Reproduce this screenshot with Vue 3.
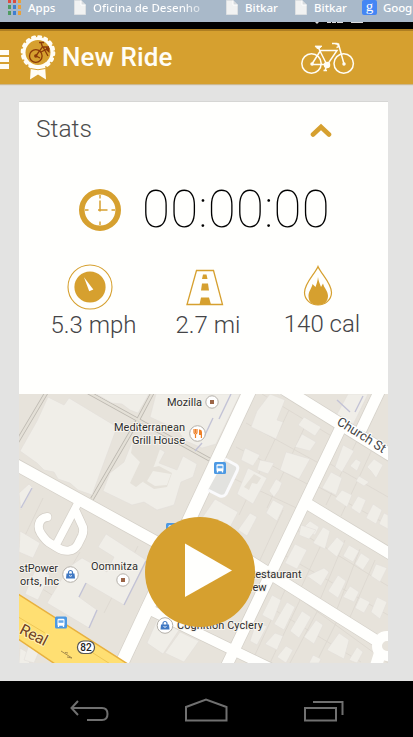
<script setup>
const bookmarks = [
  { kind: 'apps', label: 'Apps' },
  { kind: 'page', label: 'Oficina de Desenho', size: 'long' },
  { kind: 'page', label: 'Bitkar', size: 'mid' },
  { kind: 'page', label: 'Bitkar', size: 'last' },
  { kind: 'google', label: 'Goog' },
]
const appColors = ['#dc4b3f', '#dc4b3f', '#e9a13b', '#4f9b62', '#3f7fd0', '#e9a13b', '#4f9b62', '#3f7fd0', '#e9a13b']

const minorRoads = [
  'M48 390L16 444', 'M84 390L214 462', 'M154 390L138 420L92 499',
]
const roads = [
  { d: 'M10 461.5L177 553.5', w: 11.5 },
  { d: 'M250 390L121 665', w: 13 },
  { d: 'M284 389L392 456', w: 12 },
  { d: 'M380 390L361 430', w: 11 },
  { d: 'M342 425L226 667', w: 11 },
  { d: 'M306 503L392 555', w: 11 },
  { d: 'M240 555L377 641', w: 11 },
  { d: 'M142 606L270 668', w: 10 },
  { d: 'M78 503L56.5 544', w: 7.6 },
]
const loop = 'M47.3 517C38 518 37 528 41 533.500C44 538 46 540.500 49 542.500L57 547.500C66 553 74 551 77.500 545L82 536C84 531 84 528 81.500 524L76 512'
const buildings = [
  'M48 397L64 405L69 398L117 427L92 495L78 490L70 483L58 479L54 472L44 470L37 463L20 451L37 421Z',
  'M96 394L149 394L138 413L130 410L122 404L112 403Z',
  'M156 394L240 394L216 444L202 448L184 440L178 430L150 417Z',
  'M134 437L146 447L153 445L165 452L159 463L177 470L183 456L197 464L193 477L181 482L174 505L157 510L144 502L132 505L103 491L110 473L124 462Z',
  'M19 493L29 484L33 488L21 510Z',
  'M106 534L146 560L124 605L86 583L79 597L97 610L89 628L47 603L69 567L82 558L107 572L114 557L98 547Z',
  'M20 531L40 543L33 558L19 552Z', 'M36 568L50 575L38 600L25 594Z',
  'M20 648L35 657L28 664L19 664Z', 'M30 641L41 647L34 663L24 660Z',
  'M270 394L285 400L277 420L283 422L276 439L251 427L257 411Z',
  'M304 417L321 427L315 436L298 425Z', 'M302 434L316 442L310 451L295 447Z',
  'M286 452L310 459L299 479L280 470Z', 'M245 448L260 455L253 466L241 460Z',
  'M260 460L274 463L268 474L257 470Z', 'M248 468L267 478L253 504L237 494Z',
  'M276 479L282 483L279 490L274 497L269 491Z', 'M273 500L284 506L277 521L266 513Z',
  'M215 499L238 512L225 537L200 521Z', 'M250 513L257 517L247 536L238 530Z',
  'M343 445L354 451L342 472L335 467Z', 'M356 459L361 462L357 471L350 466Z',
  'M374 459L383 465L376 478L371 471L367 467Z', 'M331 472L342 478L336 495L322 488Z',
  'M359 476L369 482L364 486L356 481Z', 'M342 490L352 495L347 507L335 499Z',
  'M358 496L366 500L360 514L351 508Z', 'M373 504L382 510L376 524L366 518Z',
  'M384 513L388 515L388 529L379 524Z', 'M310 521L319 527L315 535L302 529Z',
  'M277 394L302 394L337 414L348 394L368 394L352 427Z',
  'M301 525L316 530L309 539L299 535Z', 'M323 527L330 531L325 549L313 543Z',
  'M337 537L344 543L337 557L327 549Z', 'M349 545L359 551L353 562L343 556Z',
  'M361 553L370 559L363 570L355 564Z', 'M376 564L387 568L380 582L371 576Z',
  'M295 544L307 550L297 569L285 563Z', 'M324 568L329 572L321 586L307 576Z',
  'M338 575L346 581L338 598L328 591Z', 'M350 586L359 592L354 602L343 597Z',
  'M360 597L370 602L364 613L355 608Z', 'M377 597L387 602L380 619L371 612Z',
  'M272 595L281 600L273 621L262 615Z', 'M287 602L295 607L284 630L274 624Z',
  'M302 611L311 617L299 638L290 631Z', 'M316 620L323 625L314 644L304 637Z',
  'M339 633L349 640L344 659L327 650Z', 'M357 647L363 652L357 663L349 660Z',
  'M275 633L283 636L277 650L265 644Z', 'M286 646L293 650L286 663L277 657Z',
  'M256 623L267 626L257 645L250 641Z', 'M158 618L179 630L163 654L147 643Z',
  'M180 632L199 641L184 662L165 653Z', 'M313 655L321 659L319 663L309 663Z',
]
const courtyards = [
  'M150 468L159 466L172 473L167 487L154 489L143 482Z',
  'M134 437L146 447L153 445L160 449L154 466L145 480L136 487L130 483L140 462L131 453Z',
  'M254 474L261 478L257 484L252 483L249 490L244 487Z',
]
const lots = [
  'M262 394L338 440', 'M246 423L324 466', 'M236 447L313 487', 'M226 475L303 511',
  'M289 410L239 515', 'M307 422L267 508', 'M283 510L236 612', 'M325 461L388 497',
  'M315 485L388 525', 'M363 428L326 505', 'M376 441L341 516', 'M292 527L388 586',
  'M279 552L388 615', 'M345 540L317 607', 'M360 549L334 617', 'M328 530L298 594',
  'M375 560L347 624', 'M278 583L388 663', 'M268 606L361 662', 'M286 588L254 657',
  'M301 598L270 663', 'M319 608L290 663', 'M337 621L316 663', 'M43 498L19 548',
  'M80 552L52 600', 'M138 546L104 613', 'M33 583L71 607',
]
const shades = [
  'M231 394L219 419M213 418L204 437M202 443L195 451', 'M363 396L355 412M337 400L350 412',
  'M146 561L124 605M86 583L79 597M97 610L89 628', 'M32 488L21 508',
]
</script>

<template>
  <main class="screen">
    <nav class="bookmarks">
      <div v-for="(b, i) in bookmarks" :key="i" class="bookmark" :class="[b.kind, b.size]">
        <span v-if="b.kind === 'apps'" class="app-grid">
          <i v-for="(c, n) in appColors" :key="n" :style="{ background: c }"></i>
        </span>
        <svg v-else-if="b.kind === 'page'" class="page-icon" width="12" height="15" viewBox="0 0 12 15">
          <path d="M.5 .5H7L11.5 5V14.5H.5Z" fill="#f1f2f2" stroke="#dde0e2" />
          <path d="M7 .5V5H11.5" fill="#d6dadd" stroke="#fff" />
        </svg>
        <span v-else class="google-icon">g</span>
        <span class="bookmark-label">{{ b.label }}</span>
      </div>
    </nav>
    <div class="status">
      <svg width="60" height="3" viewBox="0 0 60 3" fill="#ddd">
        <path d="M2 0h4L4 2Z M14 0h4v1h-4z M19 0h4v1h-4z M24 0h6v1h-6z M38 0h12v1H38z" />
      </svg>
    </div>

    <header class="header">
      <div class="burger"><i></i><i></i><i></i></div>
      <svg class="badge" width="36" height="46" viewBox="20 35 36 46">
        <path d="M31 65L30 79.500L38 74.500L46 79.500L45 65Z" fill="#fffdf6" />
        <circle cx="38" cy="52.500" r="15.600" fill="#fffdf6" />
        <circle cx="38" cy="52.500" r="16" fill="none" stroke="#fffdf6" stroke-width="2.600" stroke-linecap="round" stroke-dasharray="2.500 3.784" />
        <circle cx="38" cy="52.500" r="12.500" fill="#d6a02f" />
        <path d="M30.500 68.500Q38 71 45.500 68.500" fill="none" stroke="#d6a02f" stroke-width="1" />
        <g fill="none" stroke="#8b3a09" stroke-width="1.300">
          <circle cx="35.800" cy="56" r="6.300" />
          <path d="M35.800 56L42.500 47L41 42.500M39 42.500H44M36 56L40 58M42 47H49M43 47L48 56M41 52L49 48" />
        </g>
        <circle cx="35.800" cy="56" r="1.700" fill="#8b3a09" />
        <path d="M46 47L49.500 48V53L46 50Z" fill="#8b3a09" />
      </svg>
      <h1>New Ride</h1>
      <svg class="bike" width="56" height="34" viewBox="300 39 56 34" fill="none" stroke="#fffdf6" stroke-width="1.500">
        <circle cx="311.500" cy="61.500" r="9.700" /><circle cx="343.700" cy="61.500" r="9.700" />
        <path d="M312 62L320.500 48.500H337L327.500 62.500H312M318 45L327 63M335.500 42H338.500L344 62M332 41.500H337Q340 45 336.500 45.500" />
        <path d="M315 44H322L319.500 46.500H317Z" fill="#fffdf6" stroke-width=".8" />
        <circle cx="327" cy="63" r="2.500" fill="#fffdf6" />
        <path d="M327 63L325 68.500M323.500 68.500H327" />
        <circle cx="312" cy="62" r="1" fill="#fffdf6" /><circle cx="344" cy="62" r="1" fill="#fffdf6" />
      </svg>
    </header>

    <section class="card">
      <div class="card-head">
        <h2>Stats</h2>
        <svg width="22" height="16" viewBox="0 0 22 16">
          <path d="M3 12.500L11 5L19 12.500" fill="none" stroke="#d6a02f" stroke-width="4.600" stroke-linecap="round" stroke-linejoin="miter" />
        </svg>
      </div>
      <div class="timer">
        <svg width="44" height="44" viewBox="-22 -22 44 44" fill="none" stroke="#d6a02f">
          <circle r="18.200" stroke-width="5.600" />
          <path d="M0 -15V-11.500M0 11.500V15M-15 0H-11.500M11.500 0H15" stroke-width="1.400" />
          <path d="M0 -9.500V1.500M-2 0H7.500" stroke-width="1.500" />
        </svg>
        <span class="time">00:00:00</span>
      </div>
      <div class="metrics">
        <div class="metric speed">
          <svg width="46" height="46" viewBox="-23 -23 46 46">
            <circle r="22" fill="none" stroke="#d6a02f" stroke-width="1.100" />
            <circle r="15.600" fill="#d6a02f" />
            <path d="M-6 -9.800L3.300 2.500L-.8 4.200Z" fill="#fff" />
          </svg>
          <span>5.3 mph</span>
        </div>
        <div class="metric distance">
          <svg width="40" height="38" viewBox="0 0 40 38">
            <path d="M11.500 1.500H28.500L37.500 35.500H2Z" fill="none" stroke="#d6a02f" stroke-width="1.300" />
            <path d="M18 5.500H21.500L22.500 10H17Z M17 14.500H23L24 21.500H16Z M16 28.500H24L26 35.500H14.500Z" fill="#d6a02f" />
          </svg>
          <span>2.7 mi</span>
        </div>
        <div class="metric calories">
          <svg width="30" height="42" viewBox="0 0 30 42">
            <path d="M15 1.500C12 9 1.500 18 1.500 27.500A13.500 12.500 0 0 0 28.500 27.500C28.500 18 18 9 15 1.500Z" fill="none" stroke="#d6a02f" stroke-width="1.200" />
            <path d="M15 12C15.500 16 16.500 18 18 22L20 18.500C21 23 25 26 25 31C25 37 20.500 40 15 40S5.500 37 5.500 31C5.500 26 9 23 9.500 19L12.500 22C14 18 14.500 16 15 12Z" fill="#d6a02f" />
          </svg>
          <span>140 cal</span>
        </div>
      </div>

      <div class="map-wrap">
        <svg class="map" width="369" height="269" viewBox="19 394 369 269">
          <rect x="19" y="394" width="369" height="269" fill="#e7e3db" />
          <g fill="none">
            <path v-for="d in minorRoads" :key="d" :d="d" stroke="#bdb9b1" stroke-width="4" />
            <path v-for="d in minorRoads" :key="'i' + d" :d="d" stroke="#e4e0d7" stroke-width="2.400" />
            <path v-for="d in lots" :key="d" :d="d" stroke="#dcd7cf" stroke-width=".8" />
          </g>
          <path v-for="d in buildings" :key="d" :d="d" fill="#f0eee8" stroke="#e0ddd8" stroke-width=".5" />
          <path v-for="d in courtyards" :key="d" :d="d" fill="#e5e1d9" />
          <path d="M153 471L171 474L167 485L155 486L147 481Z" fill="#f0eee8" />
          <path v-for="d in shades" :key="d" :d="d" fill="none" stroke="#c3c3d6" stroke-width="1.400" />
          <g fill="none">
            <path :d="loop" stroke="#d4cfc7" stroke-width="9.600" stroke-linecap="round" />
            <path v-for="r in roads" :key="'c' + r.d" :d="r.d" stroke="#d4d0c8" :stroke-width="r.w + 1.4" />
            <path v-for="r in roads" :key="r.d" :d="r.d" stroke="#fffffd" :stroke-width="r.w" />
            <path :d="loop" stroke="#fffffd" stroke-width="8.200" stroke-linecap="round" />
            <circle cx="387" cy="646" r="10" stroke="#fffffd" stroke-width="10" />
            <path d="M380 653L376 666" stroke="#fffffd" stroke-width="12" />
            <path d="M225 459L236 465Q239 467 237 471L226 494Q224 497 220 496L208 490" fill="#e2e2df" stroke="#fafafc" stroke-width="3" />
          </g>
          <path d="M15 592L134 668H61L15 637Z" fill="#ffdf72" stroke="#e8b13f" stroke-width="1.500" />
          <path d="M15 615L45 633M93 653L115 667" stroke="#efc755" stroke-width="1" />

          <g class="label">
            <text x="167" y="406" textLength="35">Mozilla</text>
            <text x="114" y="431" textLength="71">Mediterranean</text>
            <text x="132" y="444" textLength="53">Grill House</text>
            <text x="91" y="570" textLength="47">Oomnitza</text>
            <text x="19" y="572" textLength="39">stPower</text>
            <text x="20" y="585" textLength="39">orts, Inc</text>
            <text x="301.500" y="578" text-anchor="end">Restaurant</text>
            <text x="266.500" y="591" text-anchor="end">View</text>
            <text x="177" y="629" textLength="86">Cognition Cyclery</text>
          </g>
          <text class="street" x="336" y="424" transform="rotate(32 336 424)" textLength="55">Church St</text>
          <text class="highway" x="18.500" y="633" transform="rotate(27 18.500 633)" textLength="29">Real</text>

          <g fill="#fff" stroke="#b5b1aa" stroke-width="1">
            <circle cx="212" cy="402" r="6.200" /><circle cx="197.500" cy="433.500" r="7.800" />
            <circle cx="123" cy="580" r="6.200" /><circle cx="70.500" cy="574.500" r="7.800" /><circle cx="165" cy="625.500" r="7.800" />
          </g>
          <path d="M210 400h4v4h-4zM121 578h4v4h-4z" fill="#9b6547" />
          <path d="M194 429v3.500q0 1.500 1.500 1.500V438M195.500 429v4M197 429v3.500q0 1.500-1.500 1.500" fill="none" stroke="#ef8028" stroke-width="1.200" />
          <path d="M199 429.500Q202 429 202 432V438h-1.200v-3H199Z" fill="#ef8028" />
          <g v-for="p in [[70.5, 574.5], [165, 625.500]]" :key="p[0]" :transform="`translate(${p[0]} ${p[1]})`">
            <path d="M-4 -1H4L4.500 4H-4.500Z" fill="#3f78c3" />
            <path d="M-2 -.500V-2A2 2 0 0 1 2 -2V-.500" fill="none" stroke="#3f78c3" stroke-width="1.200" />
            <path d="M-1.500 1Q0 2.500 1.500 1" fill="none" stroke="#fff" stroke-width=".9" />
          </g>
          <g v-for="p in [[220, 468], [61, 622.500], [172, 529]]" :key="p[0]" :transform="`translate(${p[0]} ${p[1]})`">
            <rect x="-6" y="-6" width="12" height="12" rx="1.500" fill="#4c99e3" />
            <rect x="-3.500" y="-3.800" width="7" height="7" rx="1.200" fill="#fff" />
            <rect x="-2.500" y="-2.200" width="5" height="2.500" fill="#65aaeb" />
            <path d="M-2.500 2.500V4.500M2.500 2.500V4.500" stroke="#fff" stroke-width="1.300" />
          </g>
          <rect x="77.500" y="641" width="17" height="12.500" rx="6" fill="#fff" stroke="#555" stroke-width="1.200" />
          <text class="route" x="86" y="651" text-anchor="middle">82</text>
          <path d="M61 651L72 658M65 652.500l3 .5M67 657l5 1" stroke="#a78c4d" stroke-width="1" />
        </svg>
        <button class="play" aria-label="Start">
          <svg width="110" height="110" viewBox="0 0 110 110">
            <circle cx="55" cy="55" r="55" fill="#d6a02f" />
            <path d="M40 26.500V80L87 53.500Z" fill="#fffffd" />
          </svg>
        </button>
      </div>
    </section>

    <footer class="system-nav">
      <svg width="413" height="56" viewBox="0 681 413 56" fill="none" stroke="#707070" stroke-width="2">
        <path d="M78 701L71.500 708L78 715M72 708H102Q107.500 708 107.500 714Q107.500 720 102 720H87" />
        <path d="M186 720.500V707L206 699.500L226.500 707V720.500Z" />
        <path d="M305 708H336V720.500H305ZM313 702H342.500V715" />
      </svg>
    </footer>
  </main>
</template>

<style>
body { margin: 0; }
</style>

<style scoped>
.screen { width: 413px; height: 737px; overflow: hidden; display: flex; flex-direction: column; background: #e3e3e2; font-family: Roboto, "Liberation Sans", sans-serif; }
.bookmarks { height: 22px; flex: none; display: flex; background: #a9b9c9; padding-left: 8px; overflow: hidden; }
.bookmark { flex: none; display: flex; align-items: center; gap: 7px; width: 66px; height: 15px; color: #fff; font: 500 11.5px/16px "Noto Sans", sans-serif; white-space: nowrap; }
.bookmark.long { width: 152px; }
.bookmark.mid { width: 69px; }
.bookmark.last { width: 67px; }
.bookmark.google { width: 51px; gap: 6px; }
.google .bookmark-label { letter-spacing: -.1px; }
.long .bookmark-label { width: 114px; background: linear-gradient(90deg, #fff 78%, #ffffff55); background-clip: text; color: transparent; }
.app-grid { width: 13px; display: grid; grid-template-columns: repeat(3, 3px); gap: 2px; align-self: flex-start; margin-top: -1px; }
.app-grid i { height: 4px; }
.page-icon { flex: none; }
.google-icon { flex: none; width: 15px; height: 15px; border-radius: 2px; background: #4486f4; text-align: center; font: 15px/12px "Liberation Serif", serif; }
.status { height: 7px; flex: none; background: #000; display: flex; padding-left: 313px; }
.header { height: 53px; flex: none; border-top: 2px solid #ae7e22; background: #d6a02f; display: flex; align-items: center; box-shadow: 0 1px 1px #ccb88f; }
.burger { width: 9px; display: grid; gap: 2px; margin: 3px 11px 0 0; }
.burger i { height: 5px; background: #fffdf6; }
.badge { flex: none; margin-top: 1px; }
.header h1 { margin: 0 0 1px 6px; width: 238px; font-size: 26px; font-weight: 500; line-height: 32px; color: #fffdf6; letter-spacing: .1px; }
.bike { flex: none; }
.card { width: 369px; margin: 18px 0 0 19px; height: 561px; flex: none; display: flex; flex-direction: column; background: #fffffd; box-shadow: 0 -1px 0 #d6d6d4; }
.card-head { height: 56px; display: flex; align-items: center; justify-content: space-between; padding: 0 56px 0 17px; }
.card-head h2 { margin: 0 0 4px; font-size: 24.5px; font-weight: 300; color: #4d4d4d; }
.timer { height: 104px; display: flex; align-items: center; padding-left: 59px; gap: 20px; }
.time { font-size: 51px; font-weight: 100; line-height: 60px; color: #000; letter-spacing: .3px; }
.metrics { height: 132px; display: flex; }
.metric { flex: none; display: flex; flex-direction: column; align-items: center; font-size: 24px; font-weight: 300; line-height: 30px; color: #444447; white-space: nowrap; }
.metric span { display: block; }
.speed { width: 149px; padding-top: 2px; }
.speed svg { margin-right: 8px; }
.distance { width: 80px; padding-top: 7px; }
.distance svg { margin: 0 7px 3px 0; }
.calories { width: 140px; padding: 3px 0 0 8px; box-sizing: border-box; }
.calories svg { margin: 0 9px 2px 0; }
.map-wrap { height: 269px; position: relative; }
.map { display: block; }
.label text { font: 400 11px Roboto, sans-serif; fill: #2e2e2e; stroke: #f6f3ed; stroke-width: 2px; paint-order: stroke; }
.street { font: 13px Roboto, sans-serif; fill: #444; stroke: #fff; stroke-width: 2px; paint-order: stroke; }
.highway { font: 400 15.5px Roboto, sans-serif; fill: #70401e; stroke: #fff0b0; stroke-width: 2px; paint-order: stroke; }
.route { font: 500 10px Roboto, sans-serif; fill: #222; }
.play { position: absolute; left: 126px; top: 123px; padding: 0; border: 0; background: none; line-height: 0; }
.system-nav { height: 56px; margin-top: auto; background: #000; }
.system-nav svg { display: block; }
</style>
